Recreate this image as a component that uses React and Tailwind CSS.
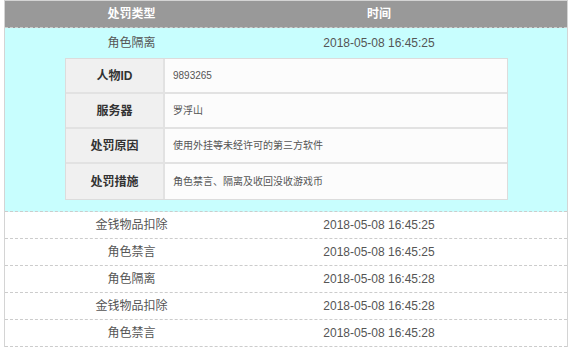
import React from "react";

const rows = [
  { type: "金钱物品扣除", time: "2018-05-08 16:45:25" },
  { type: "角色禁言", time: "2018-05-08 16:45:25" },
  { type: "角色隔离", time: "2018-05-08 16:45:28" },
  { type: "金钱物品扣除", time: "2018-05-08 16:45:28" },
  { type: "角色禁言", time: "2018-05-08 16:45:28" },
];

const detail = [
  { label: "人物ID", value: "9893265" },
  { label: "服务器", value: "罗浮山" },
  { label: "处罚原因", value: "使用外挂等未经许可的第三方软件" },
  { label: "处罚措施", value: "角色禁言、隔离及收回没收游戏币" },
];

export default function App() {
  return (
    <div
      className="w-[580px] h-[353px] bg-white overflow-hidden"
      style={{ fontFamily: '"Liberation Sans", "Noto Sans CJK SC", sans-serif' }}
    >
      <div className="ml-[4px] w-[564px] border-t border-l border-r border-[#d4d4d4] text-[12px] text-[#555]">
        {/* header */}
        <div className="flex h-[27px] items-center bg-[#999] text-white font-bold border-b border-dashed border-[#ccc]">
          <div className="w-[253px] text-center">处罚类型</div>
          <div className="w-[242px] text-center">时间</div>
          <div className="flex-1" />
        </div>

        {/* expanded row */}
        <div className="bg-[#c8fefe] border-b border-dashed border-[#ccc] pb-[11px]">
          <div className="flex h-[30px] items-center">
            <div className="w-[253px] text-center">角色隔离</div>
            <div className="w-[242px] text-center">2018-05-08 16:45:25</div>
          </div>
          <div className="ml-[60px] w-[443px] border border-[#dcdcdc] bg-[#fcfcfc]">
            {detail.map((d, i) => (
              <div
                key={i}
                className={`flex h-[35px] ${i < detail.length - 1 ? "border-b-2 border-[#e2e2e2]" : ""}`}
              >
                <div className="w-[99px] flex items-center justify-center bg-[#f0f0f0] border-r-2 border-[#e2e2e2] font-bold text-[12px] text-[#333]">
                  {d.label}
                </div>
                <div className="flex-1 flex items-center pl-[8px] text-[10px] text-[#555]">
                  {d.value}
                </div>
              </div>
            ))}
          </div>
        </div>

        {/* rows */}
        {rows.map((r, i) => (
          <div
            key={i}
            className="flex h-[27px] items-center border-b border-dashed border-[#ccc]"
          >
            <div className="w-[253px] text-center">{r.type}</div>
            <div className="w-[242px] text-center">{r.time}</div>
          </div>
        ))}
      </div>
    </div>
  );
}
